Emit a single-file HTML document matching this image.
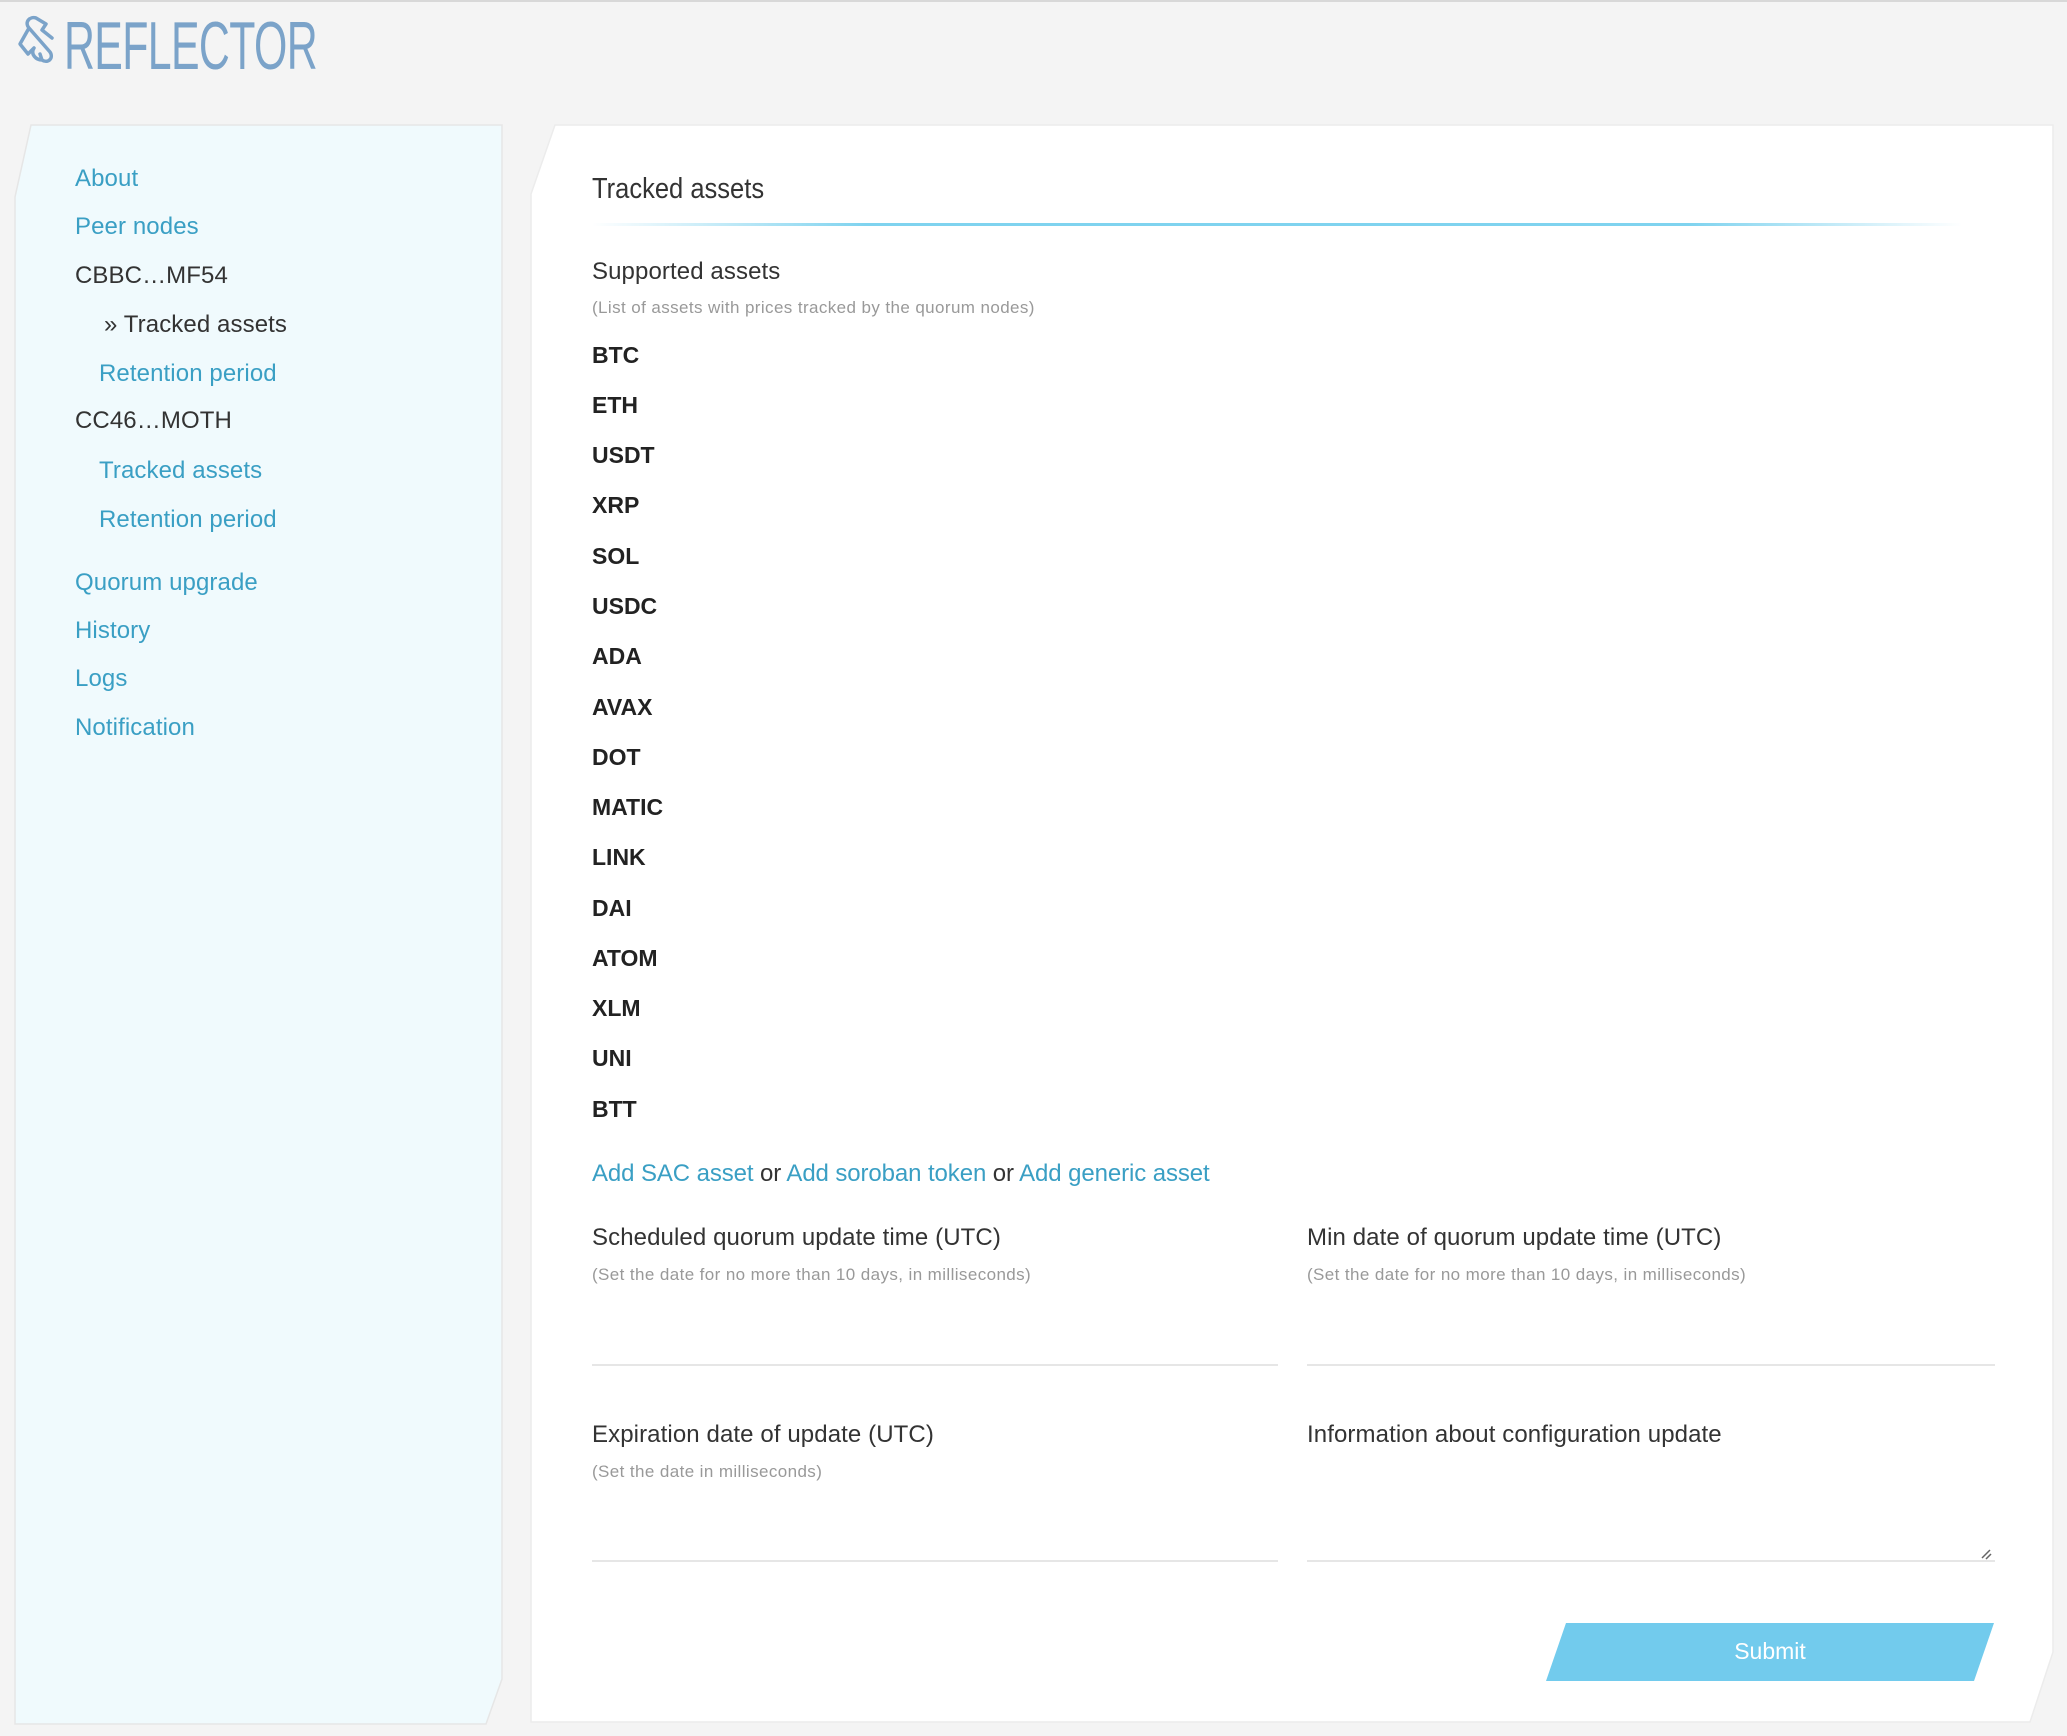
<!DOCTYPE html>
<html><head><meta charset="utf-8"><style>
*{margin:0;padding:0;box-sizing:border-box}
body{width:2067px;height:1734px;background:#f4f4f4;font-family:"Liberation Sans",sans-serif;position:relative;overflow:hidden;border-top:2px solid #d8d8d8}
.a{position:absolute;white-space:nowrap}
.nav{font-size:24px;color:#3a9fc4;letter-spacing:0.1px;line-height:30px}
.dk{color:#333}
.ast{font-size:23px;font-weight:bold;color:#222;left:592px;line-height:30px}
.lbl{font-size:24px;color:#333;line-height:30px;letter-spacing:0.1px}
.hint{font-size:17px;color:#999;line-height:22px;letter-spacing:0.4px}
.line{position:absolute;height:2px;background:#e6e6e6}
a{color:#3a9fc4;text-decoration:none}
</style></head><body>
<svg class="a" style="left:16px;top:12px" width="46" height="50" viewBox="0 0 46 50"><path d="M20 4 C14 2 8 8 13 14 L34 38 C38 44 32 50 26 46 L24 40 M20 4 L30 10 L26 16 L36 24 M13 14 L4 30 L12 40 L18 34 C14 40 20 46 26 46" fill="none" stroke="#7ba3c9" stroke-width="3.5" stroke-linecap="round" stroke-linejoin="round"/></svg>
<div class="a" style="left:64px;top:10px;font-size:68px;color:#7ba3c9;line-height:68px;transform:scaleX(0.63);transform-origin:left top;letter-spacing:-1px">REFLECTOR</div>
<svg class="a" style="left:0;top:0" width="2067" height="1734">
<polygon points="31,123 502,123 502,1677 486,1722 15,1722 15,195" fill="#f0fafd" stroke="#e6e6e6" stroke-width="1.5"/>
<polygon points="555,123 2053,123 2053,1650 2030,1720 531,1720 531,192" fill="#fff" stroke="#ececec" stroke-width="1.5"/>
<defs><linearGradient id="g" x1="0" x2="1"><stop offset="0" stop-color="#7fd3ef" stop-opacity="0"/><stop offset="0.2" stop-color="#7fd3ef"/><stop offset="0.8" stop-color="#7fd3ef"/><stop offset="1" stop-color="#7fd3ef" stop-opacity="0"/></linearGradient></defs>
<rect x="592" y="221" width="1370" height="3" fill="url(#g)"/>
<polygon points="1566,1621 1994,1621 1974,1679 1546,1679" fill="#72cbed"/>
<path d="M1982 1556 L1990 1548 M1986 1557 L1991 1552" stroke="#666" stroke-width="1.5"/>
</svg>
<div class="a nav" style="left:75px;top:162px">About</div>
<div class="a nav" style="left:75px;top:210px">Peer nodes</div>
<div class="a nav dk" style="left:75px;top:259px">CBBC…MF54</div>
<div class="a nav dk" style="left:104px;top:308px">» Tracked assets</div>
<div class="a nav" style="left:99px;top:357px">Retention period</div>
<div class="a nav dk" style="left:75px;top:404px">CC46…MOTH</div>
<div class="a nav" style="left:99px;top:454px">Tracked assets</div>
<div class="a nav" style="left:99px;top:503px">Retention period</div>
<div class="a nav" style="left:75px;top:566px">Quorum upgrade</div>
<div class="a nav" style="left:75px;top:614px">History</div>
<div class="a nav" style="left:75px;top:662px">Logs</div>
<div class="a nav" style="left:75px;top:711px">Notification</div>

<div class="a" style="left:592px;top:169px;font-size:29px;color:#333;line-height:36px;transform:scaleX(0.88);transform-origin:left">Tracked assets</div>
<div class="a lbl" style="left:592px;top:255px">Supported assets</div>
<div class="a hint" style="left:592px;top:295px">(List of assets with prices tracked by the quorum nodes)</div>
<div class="a ast" style="top:338px">BTC</div>
<div class="a ast" style="top:388px">ETH</div>
<div class="a ast" style="top:438px">USDT</div>
<div class="a ast" style="top:488px">XRP</div>
<div class="a ast" style="top:539px">SOL</div>
<div class="a ast" style="top:589px">USDC</div>
<div class="a ast" style="top:639px">ADA</div>
<div class="a ast" style="top:690px">AVAX</div>
<div class="a ast" style="top:740px">DOT</div>
<div class="a ast" style="top:790px">MATIC</div>
<div class="a ast" style="top:840px">LINK</div>
<div class="a ast" style="top:891px">DAI</div>
<div class="a ast" style="top:941px">ATOM</div>
<div class="a ast" style="top:991px">XLM</div>
<div class="a ast" style="top:1041px">UNI</div>
<div class="a ast" style="top:1092px">BTT</div>
<div class="a lbl" style="left:592px;top:1157px;color:#333;letter-spacing:-0.1px"><a>Add SAC asset</a> or <a>Add soroban token</a> or <a>Add generic asset</a></div>

<div class="a lbl" style="left:592px;top:1221px">Scheduled quorum update time (UTC)</div>
<div class="a hint" style="left:592px;top:1262px">(Set the date for no more than 10 days, in milliseconds)</div>
<div class="line" style="left:592px;top:1362px;width:686px"></div>
<div class="a lbl" style="left:1307px;top:1221px">Min date of quorum update time (UTC)</div>
<div class="a hint" style="left:1307px;top:1262px">(Set the date for no more than 10 days, in milliseconds)</div>
<div class="line" style="left:1307px;top:1362px;width:688px"></div>

<div class="a lbl" style="left:592px;top:1418px">Expiration date of update (UTC)</div>
<div class="a hint" style="left:592px;top:1459px">(Set the date in milliseconds)</div>
<div class="line" style="left:592px;top:1558px;width:686px"></div>
<div class="a lbl" style="left:1307px;top:1418px">Information about configuration update</div>
<div class="line" style="left:1307px;top:1558px;width:688px"></div>

<div class="a" style="left:1546px;top:1634px;width:448px;text-align:center;font-size:23px;color:#fff;line-height:30px">Submit</div>
</body></html>
